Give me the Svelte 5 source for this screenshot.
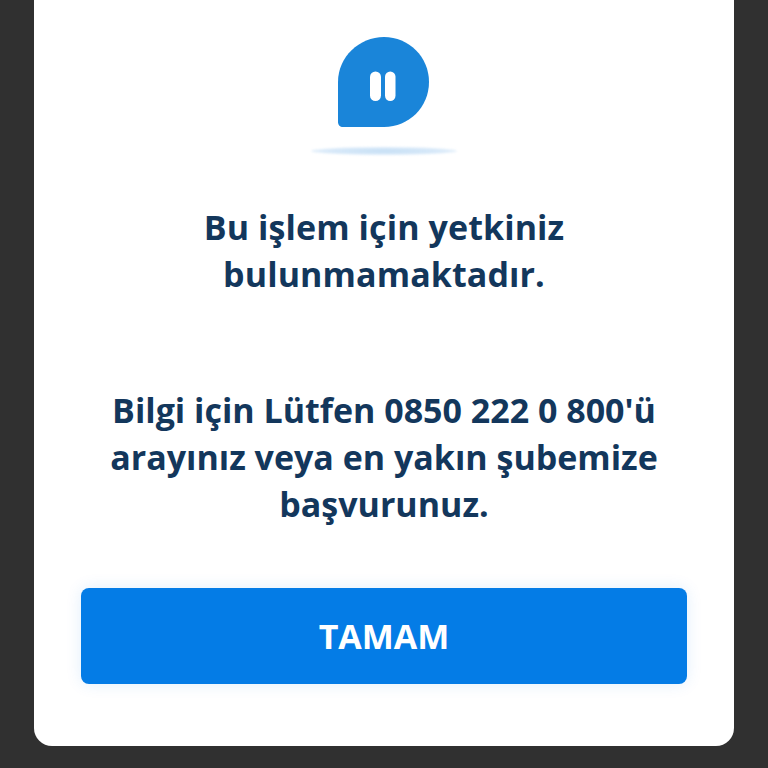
<script lang="ts">
  const title = ["Bu işlem için yetkiniz", "bulunmamaktadır."];
  const info = ["Bilgi için Lütfen 0850 222 0 800'ü", "arayınız veya en yakın şubemize", "başvurunuz."];
</script>

<div class="screen">
  <div class="card">
    <div class="icon">
      <svg width="92" height="92" viewBox="0 0 92 92" aria-hidden="true">
        <path d="M46 0C71 0 91 20 91 45C91 70 71 90 46 90H5C2 90 0 88 0 85V45C0 20 21 0 46 0Z" fill="#1a85d9" />
        <rect x="32" y="34.500" width="11" height="29.500" rx="5.500" fill="#fff" />
        <rect x="47" y="34.500" width="10.500" height="29.500" rx="5.250" fill="#fff" />
      </svg>
      <div class="shadow"></div>
    </div>

    <h2 class="title">
      {#each title as line}
        <span>{line}</span>
      {/each}
    </h2>

    <p class="info">
      {#each info as line}
        <span>{line}</span>
      {/each}
    </p>

    <button class="ok" type="button">TAMAM</button>
  </div>
</div>

<style>
  :global(body) {
    margin: 0;
    background: #303030;
  }
  .screen {
    height: 768px;
    overflow: hidden;
    background: #303030;
    padding: 0 34px;
    box-sizing: border-box;
    font-family: "Open Sans", sans-serif;
  }
  .card {
    height: 746px;
    background: #fff;
    border-radius: 0 0 18px 18px;
    box-sizing: border-box;
    padding: 37px 47px 0;
    display: flex;
    flex-direction: column;
    align-items: center;
  }
  .icon {
    display: flex;
    flex-direction: column;
    align-items: center;
    margin-right: 1px;
  }
  .icon svg {
    display: block;
  }
  .shadow {
    width: 146px;
    height: 8px;
    margin-top: 18px;
    border-radius: 50%;
    background: radial-gradient(ellipse at center, #c5dff5 0%, #d8e9f9 55%, rgba(255, 255, 255, 0) 100%);
    filter: blur(0.8px);
  }
  .title,
  .info {
    margin: 0;
    color: #13375c;
    font-size: 34px;
    font-weight: 700;
    line-height: 47px;
    text-align: center;
    white-space: nowrap;
  }
  .title span,
  .info span {
    display: block;
  }
  .title {
    margin-top: 49px;
    letter-spacing: 0.1px;
  }
  .info {
    margin-top: 89px;
  }
  .ok {
    width: 606px;
    height: 96px;
    margin-top: 60px;
    flex: none;
    border: none;
    border-radius: 8px;
    background: #047ce6;
    color: #fff;
    font: inherit;
    font-size: 34px;
    font-weight: 700;
    box-shadow: 0 0 16px rgba(4, 124, 230, 0.12);
  }
</style>
